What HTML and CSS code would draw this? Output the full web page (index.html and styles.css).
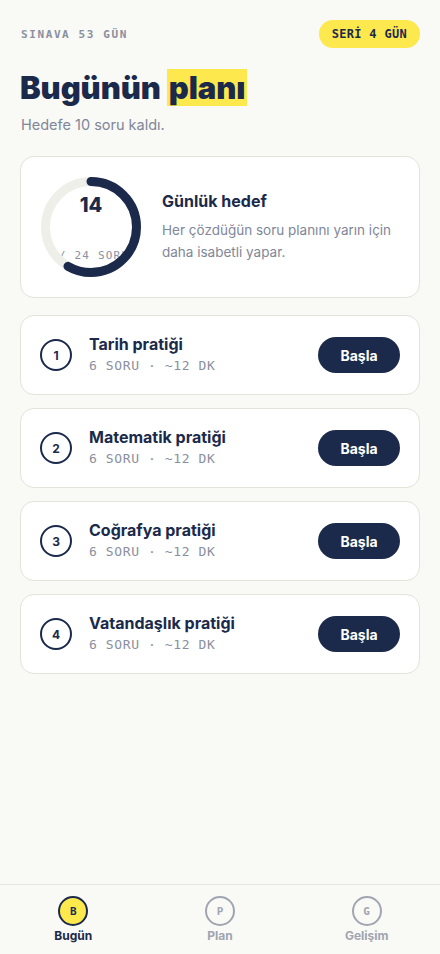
FILE: index.html
```html
<!DOCTYPE html>
<html lang="tr">
<head>
    <meta charset="UTF-8">
    <meta name="viewport" content="width=device-width, initial-scale=1.0">
    <title>Bugünün planı</title>
    <link rel="stylesheet" href="styles.css">
</head>
<body>
    <div class="app">
        <main class="content">
            <header class="top">
                <span class="countdown">SINAVA 53 GÜN</span>
                <span class="streak">SERİ 4 GÜN</span>
            </header>

            <h1 class="title">Bugünün <span class="mark">planı</span></h1>
            <p class="subtitle">Hedefe 10 soru kaldı.</p>

            <section class="goal card">
                <div class="ring">
                    <div class="ring-text">
                        <span class="ring-num">14</span>
                        <span class="ring-total">/ 24 SORU</span>
                    </div>
                    <svg class="ring-svg" width="100" height="100" viewBox="0 0 100 100">
                        <circle cx="50" cy="50" r="45.5" fill="none" stroke="#efefe9" stroke-width="9"/>
                        <circle cx="50" cy="50" r="45.5" fill="none" stroke="#1b2a4a" stroke-width="9"
                            stroke-linecap="round" stroke-dasharray="166.8 300" transform="rotate(-90 50 50)"/>
                    </svg>
                </div>
                <div class="goal-text">
                    <h2>Günlük hedef</h2>
                    <p>Her çözdüğün soru planını yarın için daha isabetli yapar.</p>
                </div>
            </section>

            <ul class="tasks">
                <li class="task card">
                    <span class="num">1</span>
                    <div class="task-info">
                        <span class="task-name">Tarih pratiği</span>
                        <span class="task-meta">6 SORU · ~12 DK</span>
                    </div>
                    <button class="start">Başla</button>
                </li>
                <li class="task card">
                    <span class="num">2</span>
                    <div class="task-info">
                        <span class="task-name">Matematik pratiği</span>
                        <span class="task-meta">6 SORU · ~12 DK</span>
                    </div>
                    <button class="start">Başla</button>
                </li>
                <li class="task card">
                    <span class="num">3</span>
                    <div class="task-info">
                        <span class="task-name">Coğrafya pratiği</span>
                        <span class="task-meta">6 SORU · ~12 DK</span>
                    </div>
                    <button class="start">Başla</button>
                </li>
                <li class="task card">
                    <span class="num">4</span>
                    <div class="task-info">
                        <span class="task-name">Vatandaşlık pratiği</span>
                        <span class="task-meta">6 SORU · ~12 DK</span>
                    </div>
                    <button class="start">Başla</button>
                </li>
            </ul>
        </main>

        <nav class="tabbar">
            <a class="tab active"><span class="tab-icon">B</span>Bugün</a>
            <a class="tab"><span class="tab-icon">P</span>Plan</a>
            <a class="tab"><span class="tab-icon">G</span>Gelişim</a>
        </nav>
    </div>
</body>
</html>
```

FILE: styles.css
```css
body {
    margin: 0;
    font-family: Inter, "Noto Sans", sans-serif;
    background-color: #f9f9f5;
    color: #1b2a4a;
}

.app {
    height: 954px;
    display: flex;
    flex-direction: column;
}

.content {
    flex: 1;
    padding: 20px 20px 0 20px;
}

.top {
    display: flex;
    justify-content: space-between;
    align-items: center;
}

.countdown {
    font-family: "DejaVu Sans Mono", monospace;
    font-size: 11px;
    font-weight: bold;
    letter-spacing: 1.6px;
    color: #8a90a0;
    padding-left: 1px;
}

.streak {
    font-family: "DejaVu Sans Mono", monospace;
    font-size: 12px;
    font-weight: bold;
    letter-spacing: 0.3px;
    background-color: #fde84d;
    color: #1b2a4a;
    height: 28px;
    line-height: 28px;
    padding: 0 13px;
    border-radius: 14px;
}

.title {
    margin: 20px 0 0 0;
    font-size: 31px;
    font-weight: 900;
    letter-spacing: -0.1px;
    line-height: 40px;
}

.title .mark {
    background-color: #fde84d;
    padding: 0 2px;
}

.subtitle {
    margin: 8px 0 0 1px;
    font-size: 14.5px;
    color: #80879a;
}

.card {
    background-color: #fff;
    border: 1px solid #e3e3d9;
    border-radius: 14px;
}

.goal {
    margin-top: 23px;
    display: flex;
    align-items: center;
    gap: 21px;
    padding: 20px 20px;
}

.ring {
    position: relative;
    width: 100px;
    height: 100px;
    flex-shrink: 0;
}

.ring-text {
    display: flex;
    flex-direction: column;
    align-items: center;
    height: 100px;
}

.ring-num {
    margin-top: 16px;
    font-size: 20px;
    font-weight: 800;
}

.ring-total {
    margin-top: 32px;
    padding-left: 6px;
    font-family: "DejaVu Sans Mono", monospace;
    font-size: 11px;
    letter-spacing: 1.2px;
    color: #8a90a0;
    white-space: nowrap;
}

.ring-svg {
    position: absolute;
    left: 0;
    top: 0;
}

.goal-text h2 {
    margin: 0 0 8px 0;
    font-size: 16px;
    font-weight: 700;
}

.goal-text p {
    margin: 0;
    font-size: 13.5px;
    line-height: 22px;
    color: #80879a;
}

.tasks {
    list-style: none;
    margin: 17px 0 0 0;
    padding: 0;
    display: flex;
    flex-direction: column;
    gap: 13px;
}

.task {
    display: flex;
    align-items: center;
    height: 78px;
    padding: 0 19px;
}

.num {
    width: 28px;
    height: 28px;
    border: 2px solid #1b2a4a;
    border-radius: 50%;
    display: flex;
    align-items: center;
    justify-content: center;
    font-size: 12px;
    font-weight: 700;
    flex-shrink: 0;
}

.task-info {
    flex: 1;
    display: flex;
    flex-direction: column;
    margin-left: 17px;
    margin-top: -4px;
    gap: 4px;
}

.task-name {
    font-size: 16px;
    font-weight: 700;
}

.task-meta {
    font-family: "DejaVu Sans Mono", monospace;
    font-size: 13px;
    letter-spacing: 0.6px;
    color: #8a90a0;
}

.start {
    width: 82px;
    height: 36px;
    border: none;
    border-radius: 18px;
    background-color: #1b2a4a;
    color: #fff;
    font-family: Inter, sans-serif;
    font-size: 14px;
    font-weight: 700;
    cursor: pointer;
}

.tabbar {
    height: 69px;
    border-top: 1px solid #e6e6de;
    display: flex;
}

.tab {
    flex: 1;
    display: flex;
    flex-direction: column;
    align-items: center;
    padding-top: 11px;
    gap: 2px;
    font-size: 12px;
    font-weight: 700;
    color: #a0a5b1;
}

.tab-icon {
    width: 26px;
    height: 26px;
    border: 2px solid #a0a5b1;
    border-radius: 50%;
    display: flex;
    align-items: center;
    justify-content: center;
    font-family: "DejaVu Sans Mono", monospace;
    font-size: 11px;
    font-weight: bold;
}

.tab.active {
    color: #1b2a4a;
}

.tab.active .tab-icon {
    background-color: #fde84d;
    border-color: #1b2a4a;
}
```
